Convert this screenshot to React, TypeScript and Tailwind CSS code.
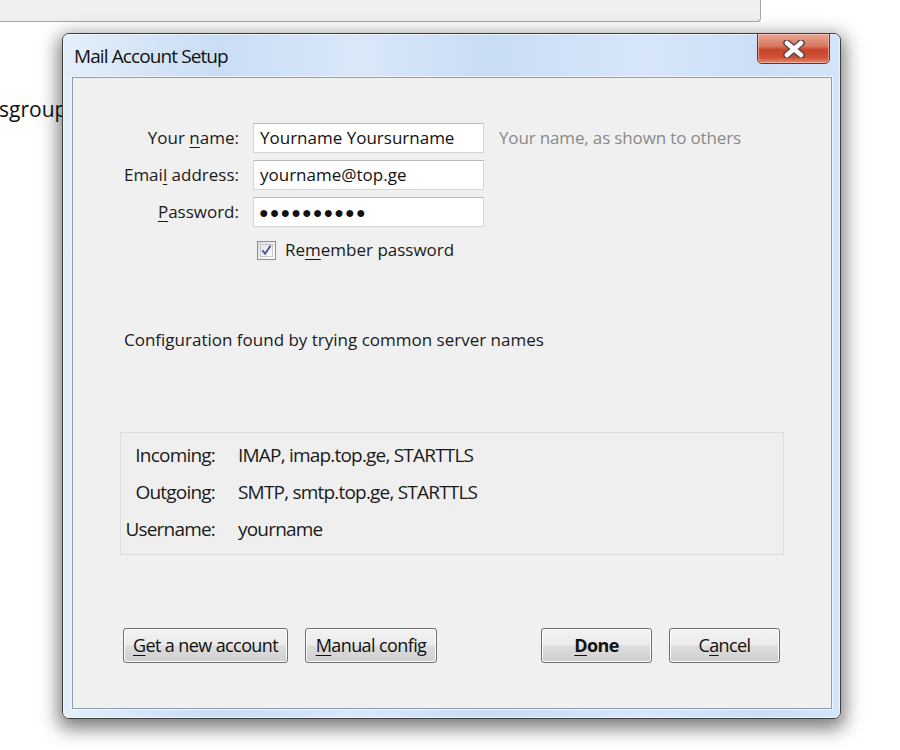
import React from "react";

const formFont = { fontFamily: '"Open Sans", "Noto Sans", sans-serif' };
const narrowFont = { fontFamily: '"Open Sans", "Noto Sans", sans-serif' };

function U({ children }: { children: React.ReactNode }) {
  return <span className="underline underline-offset-[3px] decoration-1">{children}</span>;
}

function Btn({ w, bold, children }: { w: string; bold?: boolean; children: React.ReactNode }) {
  return (
    <button
      className={`${w} h-[35px] rounded-[3px] border border-[#707070] bg-[linear-gradient(#f2f2f2_0%,#ebebeb_48%,#dddddd_52%,#cfcfcf_100%)] shadow-[inset_0_0_0_1px_#fcfcfc] text-[18px] tracking-[-0.6px] whitespace-nowrap text-[#111] ${bold ? "font-bold" : ""}`}
      style={narrowFont}
    >
      {children}
    </button>
  );
}

function InfoRow({ k, v }: { k: string; v: string }) {
  return (
    <div className="flex items-center h-[37px] text-[19px] tracking-[-0.8px] text-[#1a1a1a]" style={narrowFont}>
      <div className="w-[94px] text-right">{k}</div>
      <div className="ml-[23px]">{v}</div>
    </div>
  );
}

export default function App() {
  return (
    <div className="relative w-[900px] h-[750px] bg-white overflow-hidden">
      <div className="w-[761px] h-[22px] bg-[#f0f0f0] border-b border-r border-[#a6a6a6] rounded-br-[4px]" />
      <div className="mt-[72px] -ml-[1px] text-[21px] text-[#111]" style={formFont}>
        sgroup
      </div>

      {/* Dialog window */}
      <div className="absolute left-[62px] top-[33px] w-[779px] h-[686px] rounded-[7px] border border-[#3e3e3e] bg-[linear-gradient(90deg,#e4eef9_0%,#c9ddf4_20%,#d9e8f9_38%,#c8dcf4_55%,#d7e7f9_75%,#cadef5_90%,#d3e5f8_100%)] shadow-[0_6px_18px_4px_rgba(0,0,0,0.5)]">
        <div className="absolute inset-0 rounded-[6px] border border-[#f4f9fe]/70 pointer-events-none" />
        {/* title */}
        <div className="h-[43px] flex items-center pl-[11px] pt-[2px]">
          <span className="text-[19px] tracking-[-0.9px] text-[#111]" style={narrowFont}>
            Mail Account Setup
          </span>
        </div>
        {/* close button */}
        <div className="absolute -top-[1px] right-[10px] w-[73px] h-[31px] rounded-b-[5px] border border-[#7b2d20] bg-[linear-gradient(#eaa593_0%,#d97a62_40%,#c8452a_55%,#cf5034_80%,#e48a6e_100%)] shadow-[inset_0_0_0_1px_rgba(255,220,210,0.5)] flex items-center justify-center">
          <svg width="24" height="18" viewBox="0 0 24 18">
            <path d="M5 3 L19 15 M19 3 L5 15" stroke="#5a4744" strokeWidth="7.5" strokeLinecap="round" />
            <path d="M5 3 L19 15 M19 3 L5 15" stroke="#ffffff" strokeWidth="4.5" strokeLinecap="round" />
          </svg>
        </div>

        {/* client area */}
        <div
          className="ml-[9px] mr-[8px] h-[632px] border border-[#8d9db3] bg-[#f0f0f0] flex flex-col shadow-[0_0_0_1px_#eef5fd]"
          style={formFont}
        >
          <div className="pt-[45px] flex flex-col gap-[7px]">
            <div className="flex items-center h-[30px]">
              <div className="w-[166px] text-right text-[17px] text-[#1a1a1a]">
                Your <U>n</U>ame:
              </div>
              <div className="ml-[14px] w-[231px] h-[30px] bg-white border border-[#d5d5d5] border-t-[#b8b8b8] flex items-center pl-[6px] text-[17px] text-[#111]">
                Yourname Yoursurname
              </div>
              <div className="ml-[15px] text-[17px] tracking-[-0.15px] text-[#8a8a8a]">Your name, as shown to others</div>
            </div>
            <div className="flex items-center h-[30px]">
              <div className="w-[166px] text-right text-[17px] text-[#1a1a1a]">
                Emai<U>l</U> address:
              </div>
              <div className="ml-[14px] w-[231px] h-[30px] bg-white border border-[#d5d5d5] border-t-[#b8b8b8] flex items-center pl-[6px] text-[17px] text-[#111]">
                yourname@top.ge
              </div>
            </div>
            <div className="flex items-center h-[30px]">
              <div className="w-[166px] text-right text-[17px] text-[#1a1a1a]">
                <U>P</U>assword:
              </div>
              <div className="ml-[14px] w-[231px] h-[30px] bg-white border border-[#d5d5d5] border-t-[#b8b8b8] flex items-center pl-[5px] text-[16px] text-[#111] tracking-[1.1px]">
                ●●●●●●●●●●
              </div>
            </div>
          </div>

          <div className="mt-[13px] ml-[184px] flex items-center h-[20px]">
            <div className="w-[19px] h-[19px] border border-[#8e8f8f] bg-[linear-gradient(135deg,#dcdcdc,#ffffff)] p-[2px]">
              <div className="w-full h-full border border-[#c9c9c9] bg-[linear-gradient(135deg,#e6e6e6,#fbfbfb)] flex items-center justify-center">
                <svg width="12" height="12" viewBox="0 0 12 12">
                  <path d="M1.5 6.5 L4.5 10 L10.5 1" stroke="#3e5a95" strokeWidth="2" fill="none" />
                </svg>
              </div>
            </div>
            <span className="ml-[9px] text-[17px] text-[#1a1a1a]">
              Re<U>m</U>ember password
            </span>
          </div>

          <div className="mt-[68px] ml-[51px] h-[24px] flex items-center text-[17px] text-[#1a1a1a]">
            Configuration found by trying common server names
          </div>

          <div className="mt-[80px] ml-[47px] w-[664px] h-[123px] rounded-[2px] border border-[#dcdcdc] bg-[#efefef] pt-[4px]">
            <InfoRow k="Incoming:" v="IMAP, imap.top.ge, STARTTLS" />
            <InfoRow k="Outgoing:" v="SMTP, smtp.top.ge, STARTTLS" />
            <InfoRow k="Username:" v="yourname" />
          </div>

          <div className="mt-[73px] ml-[50px] flex items-center">
            <Btn w="w-[165px]">
              <U>G</U>et a new account
            </Btn>
            <div className="ml-[17px]">
              <Btn w="w-[132px]">
                <U>M</U>anual config
              </Btn>
            </div>
            <div className="ml-[104px]">
              <Btn w="w-[111px]" bold>
                <U>D</U>one
              </Btn>
            </div>
            <div className="ml-[17px]">
              <Btn w="w-[111px]">
                C<U>a</U>ncel
              </Btn>
            </div>
          </div>
        </div>
      </div>
    </div>
  );
}
